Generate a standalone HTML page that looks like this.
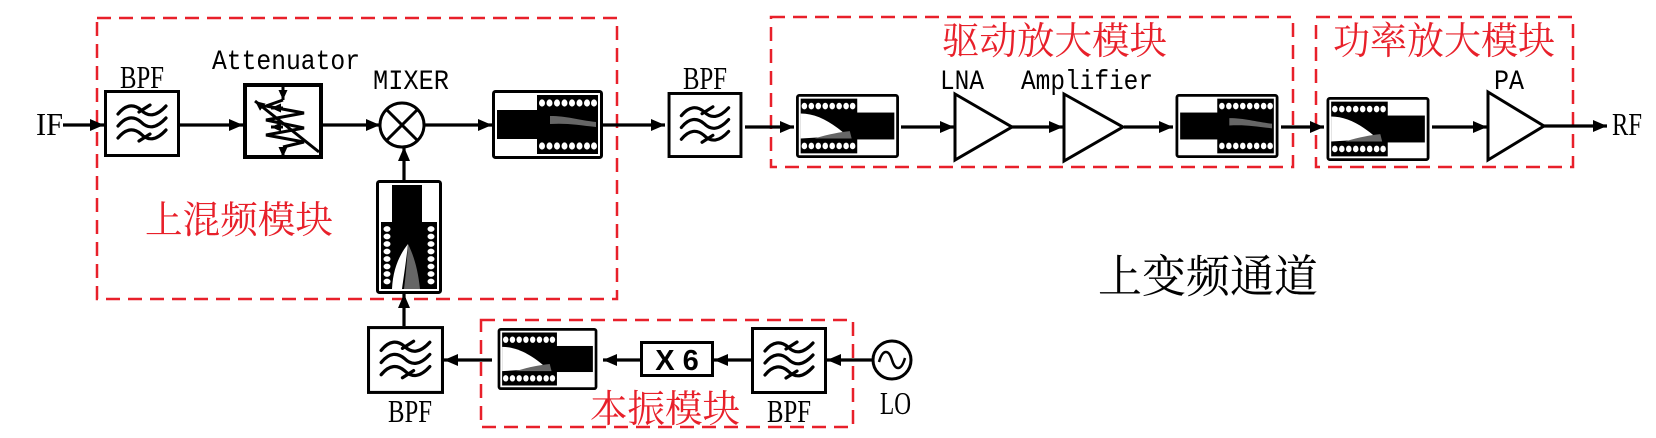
<!DOCTYPE html>
<html><head><meta charset="utf-8"><style>
html,body{margin:0;padding:0;background:#fff;}
svg{display:block;}
.s{font-family:"Liberation Serif","Noto Serif CJK SC",serif;}
.m{font-family:"Liberation Mono",monospace;}
.cn{font-family:"Liberation Serif","Noto Serif CJK SC",serif;fill:#e8202a;}
</style></head><body>
<svg width="1656" height="438" viewBox="0 0 1656 438" xmlns="http://www.w3.org/2000/svg">
<defs>
<symbol id="bpf" viewBox="0 0 76 67">
<rect x="1.5" y="1.5" width="73" height="64" fill="#fff" stroke="#000" stroke-width="3"/>
<g fill="none" stroke="#000" stroke-width="3.2" stroke-linecap="round">
<path d="M14,24 C22,14 30,14 37,20 C44,27 52,27 62,16"/>
<path d="M14,36 C22,26 30,26 37,32 C44,39 52,39 62,28"/>
<path d="M14,48 C22,38 30,38 37,44 C44,51 52,51 62,40"/>
<path d="M35,22 l11,-7 M35,51 l11,-7"/>
</g>
</symbol>
<symbol id="cf" viewBox="0 0 111 69">
<rect x="1.5" y="1.5" width="108" height="66" fill="#fff" stroke="#000" stroke-width="3" rx="2"/>
<rect x="45" y="5" width="61" height="59" fill="#000"/>
<rect x="5" y="20" width="62" height="29" fill="#000"/>
<path d="M58,26 C75,26 86,30 104,32 L104,37 C86,35 75,33 58,34 Z" fill="#666"/>
<g fill="#fff">
<ellipse cx="50" cy="13" rx="3" ry="3.6"/><ellipse cx="57.5" cy="13" rx="3" ry="3.6"/><ellipse cx="65" cy="13" rx="3" ry="3.6"/><ellipse cx="72.5" cy="13" rx="3" ry="3.6"/><ellipse cx="80" cy="13" rx="3" ry="3.6"/><ellipse cx="87.5" cy="13" rx="3" ry="3.6"/><ellipse cx="95" cy="13" rx="3" ry="3.6"/><ellipse cx="102" cy="13" rx="3" ry="3.6"/>
<ellipse cx="50" cy="56" rx="3" ry="3.6"/><ellipse cx="57.5" cy="56" rx="3" ry="3.6"/><ellipse cx="65" cy="56" rx="3" ry="3.6"/><ellipse cx="72.5" cy="56" rx="3" ry="3.6"/><ellipse cx="80" cy="56" rx="3" ry="3.6"/><ellipse cx="87.5" cy="56" rx="3" ry="3.6"/><ellipse cx="95" cy="56" rx="3" ry="3.6"/><ellipse cx="102" cy="56" rx="3" ry="3.6"/>
</g>
</symbol>
<symbol id="cr" viewBox="0 0 111 69">
<rect x="1.5" y="1.5" width="108" height="66" fill="#fff" stroke="#000" stroke-width="3" rx="2"/>
<rect x="5" y="5" width="61" height="59" fill="#000"/>
<rect x="44" y="20" width="62" height="29" fill="#000"/>
<path d="M5,21 C22,21 38,30 55,45 L5,48 Z" fill="#fff"/>
<path d="M20,48 C36,43 48,41 58,40 L60,48 Z" fill="#666"/>
<g fill="#fff">
<ellipse cx="9" cy="13" rx="3" ry="3.6"/><ellipse cx="16.5" cy="13" rx="3" ry="3.6"/><ellipse cx="24" cy="13" rx="3" ry="3.6"/><ellipse cx="31.5" cy="13" rx="3" ry="3.6"/><ellipse cx="39" cy="13" rx="3" ry="3.6"/><ellipse cx="46.5" cy="13" rx="3" ry="3.6"/><ellipse cx="54" cy="13" rx="3" ry="3.6"/><ellipse cx="61" cy="13" rx="3" ry="3.6"/>
<ellipse cx="9" cy="56" rx="3" ry="3.6"/><ellipse cx="16.5" cy="56" rx="3" ry="3.6"/><ellipse cx="24" cy="56" rx="3" ry="3.6"/><ellipse cx="31.5" cy="56" rx="3" ry="3.6"/><ellipse cx="39" cy="56" rx="3" ry="3.6"/><ellipse cx="46.5" cy="56" rx="3" ry="3.6"/><ellipse cx="54" cy="56" rx="3" ry="3.6"/><ellipse cx="61" cy="56" rx="3" ry="3.6"/>
</g>
</symbol>
<marker id="ah" viewBox="0 0 14 12" refX="14" refY="6" markerWidth="14" markerHeight="12" markerUnits="userSpaceOnUse" orient="auto">
<path d="M0,0 L14,6 L0,12 Z" fill="#000"/>
</marker>
<marker id="as" viewBox="0 0 10 9" refX="10" refY="4.5" markerWidth="10" markerHeight="9" markerUnits="userSpaceOnUse" orient="auto">
<path d="M0,0 L10,4.5 L0,9 Z" fill="#000"/>
</marker>
</defs>

<g fill="none" stroke="#e8202a" stroke-width="2.5" stroke-dasharray="14 8">
<rect x="97" y="18" width="520" height="281"/>
<rect x="771" y="17" width="522" height="150"/>
<rect x="1316" y="17" width="257" height="150"/>
<rect x="481" y="320" width="372" height="107"/>
</g>

<g stroke="#000" stroke-width="3.2" fill="none" marker-end="url(#ah)">
<line x1="63" y1="125" x2="104" y2="125"/>
<line x1="180" y1="125" x2="243" y2="125"/>
<line x1="323" y1="125" x2="380" y2="125"/>
<line x1="424" y1="125" x2="492" y2="125"/>
<line x1="603" y1="125" x2="665" y2="125"/>
<line x1="745" y1="127" x2="794" y2="127"/>
<line x1="901" y1="127" x2="954" y2="127"/>
<line x1="1012" y1="127" x2="1063" y2="127"/>
<line x1="1124" y1="127" x2="1173" y2="127"/>
<line x1="1281" y1="127" x2="1324" y2="127"/>
<line x1="1432" y1="127" x2="1487" y2="127"/>
<line x1="1544" y1="126" x2="1607" y2="126"/>
<line x1="404" y1="180" x2="404" y2="147"/>
<line x1="404" y1="326" x2="404" y2="294"/>
<line x1="492" y1="360" x2="444" y2="360"/>
<line x1="640" y1="360" x2="603" y2="360"/>
<line x1="751" y1="360" x2="714" y2="360"/>
<line x1="873" y1="360" x2="827" y2="360"/>
</g>

<use href="#bpf" x="104" y="90" width="76" height="67"/>
<use href="#bpf" x="665" y="92" width="80" height="66"/>
<use href="#bpf" x="367" y="326" width="77" height="68"/>
<use href="#bpf" x="751" y="327" width="76" height="67"/>

<rect x="245" y="85" width="76" height="72" fill="#fff" stroke="#000" stroke-width="4"/>
<g stroke="#000" stroke-width="3" fill="none">
<line x1="283" y1="86" x2="283" y2="100" marker-end="url(#as)"/>
<path d="M283,100 L266,106 L304,113 L266,120 L304,128 L266,135 L304,142 L283,147"/>
<line x1="283" y1="147" x2="283" y2="157" marker-end="url(#as)"/>
<line x1="319" y1="152" x2="255" y2="101" marker-end="url(#as)"/>
<line x1="283" y1="108" x2="271" y2="108" marker-end="url(#as)"/>
<line x1="283" y1="127" x2="271" y2="127" marker-end="url(#as)"/>
</g>

<circle cx="402" cy="125" r="22" fill="#fff" stroke="#000" stroke-width="3"/>
<g stroke="#000" stroke-width="3"><line x1="386.5" y1="109.5" x2="417.5" y2="140.5"/><line x1="417.5" y1="109.5" x2="386.5" y2="140.5"/></g>

<use href="#cf" x="492" y="90" width="111" height="69"/>
<use href="#cr" x="794" y="94" width="107" height="64"/>
<use href="#cf" x="1173" y="94" width="108" height="64"/>
<use href="#cr" x="1324" y="97" width="108" height="64"/>
<use href="#cr" x="492" y="328" width="111" height="62"/>

<rect x="377.5" y="181.5" width="63" height="111" fill="#fff" stroke="#000" stroke-width="3" rx="2"/>
<rect x="392" y="185" width="30" height="80" fill="#000"/>
<rect x="381" y="222" width="56" height="67" fill="#000"/>
<path d="M392,289 C393,268 400,254 408,244 C406,262 404,275 402,289 Z" fill="#fff"/>
<path d="M408,244 C414,256 418,270 420,289 L404,289 C406,274 407,260 408,244 Z" fill="#666"/>
<g fill="#fff">
<ellipse cx="387" cy="229" rx="3.5" ry="2.9"/><ellipse cx="387" cy="236.5" rx="3.5" ry="2.9"/><ellipse cx="387" cy="244" rx="3.5" ry="2.9"/><ellipse cx="387" cy="251.5" rx="3.5" ry="2.9"/><ellipse cx="387" cy="259" rx="3.5" ry="2.9"/><ellipse cx="387" cy="266.5" rx="3.5" ry="2.9"/><ellipse cx="387" cy="274" rx="3.5" ry="2.9"/><ellipse cx="387" cy="281.5" rx="3.5" ry="2.9"/>
<ellipse cx="431" cy="229" rx="3.5" ry="2.9"/><ellipse cx="431" cy="236.5" rx="3.5" ry="2.9"/><ellipse cx="431" cy="244" rx="3.5" ry="2.9"/><ellipse cx="431" cy="251.5" rx="3.5" ry="2.9"/><ellipse cx="431" cy="259" rx="3.5" ry="2.9"/><ellipse cx="431" cy="266.5" rx="3.5" ry="2.9"/><ellipse cx="431" cy="274" rx="3.5" ry="2.9"/><ellipse cx="431" cy="281.5" rx="3.5" ry="2.9"/>
</g>

<g fill="#fff" stroke="#000" stroke-width="3">
<path d="M955,94 L1012,127 L955,160 Z"/>
<path d="M1064,94 L1123,127 L1064,161 Z"/>
<path d="M1488,92 L1544,126 L1488,160 Z"/>
</g>

<rect x="641.5" y="342.5" width="71" height="33" fill="#fff" stroke="#000" stroke-width="3"/>
<text x="677" y="370" text-anchor="middle" font-family="Liberation Sans, sans-serif" font-weight="bold" font-size="29">X 6</text>

<circle cx="892" cy="360" r="19" fill="#fff" stroke="#000" stroke-width="3"/>
<path d="M879,362 C883,348 889,350 892,360 C895,370 901,372 905,358" fill="none" stroke="#000" stroke-width="2.5"/>

<g class="s" font-size="32" fill="#000">
<text x="36" y="135" textLength="27" lengthAdjust="spacingAndGlyphs">IF</text>
<text x="1612" y="135" textLength="30" lengthAdjust="spacingAndGlyphs">RF</text>
<text x="120" y="88" textLength="44" lengthAdjust="spacingAndGlyphs">BPF</text>
<text x="683" y="89" textLength="44" lengthAdjust="spacingAndGlyphs">BPF</text>
<text x="388" y="422" textLength="44" lengthAdjust="spacingAndGlyphs">BPF</text>
<text x="767" y="422" textLength="44" lengthAdjust="spacingAndGlyphs">BPF</text>
<text x="880" y="414" textLength="31" lengthAdjust="spacingAndGlyphs">LO</text>
</g>
<g class="m" font-size="28" fill="#000">
<text x="212" y="69" textLength="148" lengthAdjust="spacingAndGlyphs">Attenuator</text>
<text x="373" y="89" textLength="76" lengthAdjust="spacingAndGlyphs">MIXER</text>
<text x="940" y="89" textLength="44" lengthAdjust="spacingAndGlyphs">LNA</text>
<text x="1021" y="89" textLength="132" lengthAdjust="spacingAndGlyphs">Amplifier</text>
<text x="1494" y="89" textLength="30" lengthAdjust="spacingAndGlyphs">PA</text>
</g>
<g class="cn" font-size="38">
<text x="942" y="54" textLength="225" lengthAdjust="spacingAndGlyphs">驱动放大模块</text>
<text x="1333" y="54" textLength="222" lengthAdjust="spacingAndGlyphs">功率放大模块</text>
<text x="145" y="233" textLength="188" lengthAdjust="spacingAndGlyphs">上混频模块</text>
<text x="590" y="422" textLength="150" lengthAdjust="spacingAndGlyphs">本振模块</text>
</g>
<text x="1098" y="292" font-size="45" fill="#000" font-family="Liberation Serif, Noto Serif CJK SC, serif" textLength="220" lengthAdjust="spacingAndGlyphs">上变频通道</text>
</svg>
</body></html>
